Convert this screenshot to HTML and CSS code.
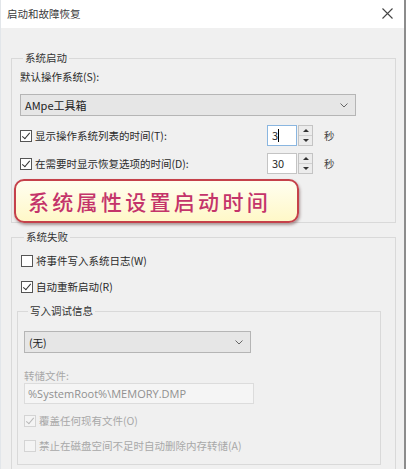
FILE: index.html
```html
<!DOCTYPE html>
<html lang="zh">
<head>
<meta charset="utf-8">
<title>启动和故障恢复</title>
<link rel="stylesheet" href="styles.css">
</head>
<body>
<div class="window">
  <div class="titlebar">
    <span class="title">启动和故障恢复</span>
    <svg class="close" width="11" height="11" viewBox="0 0 11 11"><path d="M0.5 0.5L10.5 10.5M10.5 0.5L0.5 10.5" stroke="#444" stroke-width="1.1" fill="none"/></svg>
  </div>
  <div class="content">
    <div class="group g1">
      <div class="legend">系统启动</div>
      <div class="label l-default">默认操作系统(S):</div>
      <div class="select s-os">
        <span>AMpe工具箱</span>
        <svg class="chev" width="8" height="5" viewBox="0 0 8 5"><path d="M0.5 0.5L4 4L7.5 0.5" stroke="#666" stroke-width="1" fill="none"/></svg>
      </div>
      <div class="spinrow r1">
        <div class="check-label"><span class="cb checked"></span><span>显示操作系统列表的时间(T):</span></div>
        <div class="num focus">3<span class="caret"></span></div>
        <div class="spin"><span class="up"></span><span class="down"></span></div>
        <span class="unit">秒</span>
      </div>
      <div class="spinrow r2">
        <div class="check-label"><span class="cb checked"></span><span>在需要时显示恢复选项的时间(D):</span></div>
        <div class="num">30</div>
        <div class="spin"><span class="up"></span><span class="down"></span></div>
        <span class="unit">秒</span>
      </div>
      <div class="callout">系统属性设置启动时间</div>
    </div>

    <div class="group g2">
      <div class="legend">系统失败</div>
      <div class="check-label row w1"><span class="cb"></span><span>将事件写入系统日志(W)</span></div>
      <div class="check-label row w2"><span class="cb checked"></span><span>自动重新启动(R)</span></div>
      <div class="group g3">
        <div class="legend">写入调试信息</div>
        <div class="select s-dbg">
          <span>(无)</span>
          <svg class="chev" width="8" height="5" viewBox="0 0 8 5"><path d="M0.5 0.5L4 4L7.5 0.5" stroke="#666" stroke-width="1" fill="none"/></svg>
        </div>
        <div class="label disabled l-dump">转储文件:</div>
        <div class="path">%SystemRoot%\MEMORY.DMP</div>
        <div class="check-label row disabled o1"><span class="cb checked dis"></span><span>覆盖任何现有文件(O)</span></div>
        <div class="check-label row disabled o2"><span class="cb dis"></span><span>禁止在磁盘空间不足时自动删除内存转储(A)</span></div>
      </div>
    </div>
  </div>
</div>
</body>
</html>
```

FILE: styles.css
```css
* { box-sizing: border-box; }
html, body { margin: 0; padding: 0; }
body {
  width: 406px;
  height: 469px;
  overflow: hidden;
  background: #f0f0f0;
  font-family: "Noto Sans CJK SC", "Noto Sans", sans-serif;
  font-size: 10.5px;
  color: #2a2a2a;
}
.window {
  width: 406px;
  height: 469px;
  background: #f0f0f0;
  border-right: 2px solid #8c8c8c;
  border-left: 1px solid #e2e6ea;
  overflow: hidden;
}
.titlebar {
  height: 28px;
  background: #ffffff;
  display: flex;
  align-items: center;
  justify-content: space-between;
  padding: 0 11px 0 6px;
}
.title { color: #3a3a3a; line-height: 14px; }
.close { margin-top: -2px; }
.content { padding: 0 8px 0 10px; }

.group {
  border: 1px solid #d9d9d9;
  position: relative;
}
.legend {
  display: block;
  width: max-content;
  line-height: 14px;
  height: 14px;
  margin-top: -8px;
  margin-left: 3px;
  padding: 0 2px;
  background: #f0f0f0;
  color: #333;
}
.g1 {
  margin-top: 30px;
  height: 165px;
  padding-left: 8px;
}
.label { line-height: 14px; }
.l-default { margin-top: 5px; }
.select {
  height: 22px;
  border: 1px solid #b5b5b5;
  background: #e6e6e6;
  display: flex;
  align-items: center;
  justify-content: space-between;
  padding: 0 7px 0 4px;
  color: #222;
}
.s-os { width: 336px; margin-top: 10px; font-size: 11px; }
.spinrow {
  display: flex;
  align-items: center;
  height: 21px;
}
.r1 { margin-top: 9px; }
.r2 { margin-top: 7px; }
.check-label {
  display: flex;
  align-items: center;
  gap: 3px;
  line-height: 16px;
}
.spinrow .check-label { width: 247px; }
.cb {
  width: 12px;
  height: 12px;
  border: 1px solid #555;
  background: #fff;
  position: relative;
  flex: none;
}
.cb.checked::after {
  content: "";
  position: absolute;
  left: 3px;
  top: 0px;
  width: 3px;
  height: 7px;
  border-right: 1.2px solid #333;
  border-bottom: 1.2px solid #333;
  transform: rotate(40deg);
}
.cb.dis { border-color: #d4d4d4; background: #f4f4f4; }
.cb.dis.checked::after { border-color: #b8b8b8; }
.num {
  width: 30px;
  height: 21px;
  border: 1px solid #c4c4c4;
  background: #fff;
  padding-left: 4px;
  line-height: 19px;
  font-size: 11px;
  display: flex;
  align-items: center;
}
.num.focus { border-color: #8ab6e0; }
.caret {
  display: inline-block;
  width: 1px;
  height: 13px;
  background: #000;
}
.spin {
  width: 15px;
  height: 21px;
  margin-left: 1px;
  border: 1px solid #c4c4c4;
  background: #ececec;
  display: flex;
  flex-direction: column;
}
.spin span {
  flex: 1;
  display: flex;
  align-items: center;
  justify-content: center;
}
.spin .up { border-bottom: 1px solid #d0d0d0; }
.spin .up::before {
  content: "";
  border-left: 3px solid transparent;
  border-right: 3px solid transparent;
  border-bottom: 3px solid #333;
}
.spin .down::before {
  content: "";
  border-left: 3px solid transparent;
  border-right: 3px solid transparent;
  border-top: 3px solid #333;
}
.unit { margin-left: 11px; color: #444; }

.callout {
  position: absolute;
  left: 2px;
  top: 120px;
  width: 285px;
  height: 44px;
  border: 2px solid #c5414a;
  border-radius: 10px;
  background: linear-gradient(#fffef0, #fff8c8);
  box-shadow: 1px 2px 3px rgba(80, 40, 40, 0.45);
  color: #c4346a;
  font-size: 21px;
  font-weight: 500;
  letter-spacing: 3.3px;
  line-height: 40px;
  padding-left: 12px;
  white-space: nowrap;
}

.g2 {
  margin-top: 14px;
  height: 260px;
  padding-left: 9px;
}
.row { height: 16px; }
.w1 { margin-top: 9px; }
.w2 { margin-top: 10px; }
.g3 {
  margin-top: 16px;
  margin-left: -4px;
  width: 364px;
  height: 154px;
  padding-left: 6px;
}
.g3 .legend { margin-left: 4px; }
.s-dbg { width: 227px; margin-top: 13px; }
.disabled { color: #a8a8a8; }
.l-dump { margin-top: 16px; }
.path {
  width: 230px;
  height: 21px;
  margin-top: 0px;
  border: 1px solid #dcdcdc;
  background: #f5f5f5;
  color: #909090;
  line-height: 19px;
  padding-left: 3px;
  font-size: 11px;
  font-family: "Open Sans", "Noto Sans", sans-serif;
}
.o1 { margin-top: 9px; }
.o2 { margin-top: 9px; }
```
